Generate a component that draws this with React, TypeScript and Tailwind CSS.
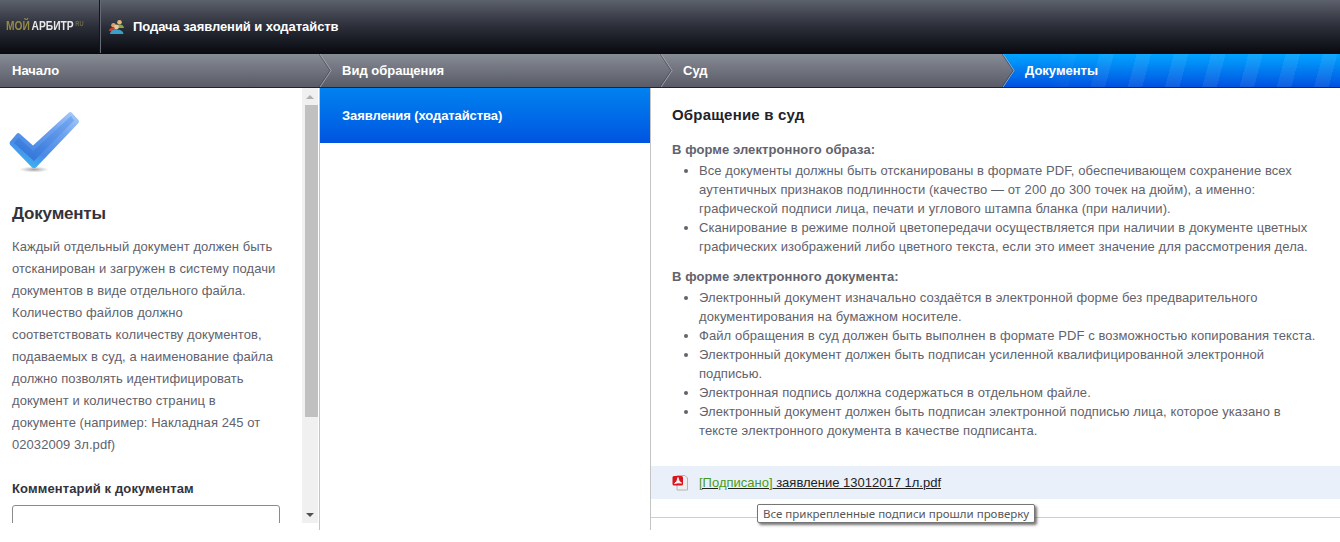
import React from "react";

function Chevron({ fill }: { fill?: boolean }) {
  return (
    <svg className="absolute left-0 top-0" width="14" height="33" viewBox="0 0 14 33" fill="none">
      <defs>
        <linearGradient id="greyTri" x1="0" y1="0" x2="0" y2="1">
          <stop offset="0" stopColor="#878b94" />
          <stop offset="1" stopColor="#595c66" />
        </linearGradient>
      </defs>
      {fill && <path d="M0 0 L11 16.5 L0 33 Z" fill="url(#greyTri)" />}
      <path d="M1 0 L12 16.5 L1 33" stroke="#a6a9b1" strokeWidth="1" />
      <path d="M0 0 L11 16.5 L0 33" stroke="#3a3d46" strokeWidth="1" opacity="0.55" />
    </svg>
  );
}

function Step({ label, className, labelClass }: { label: string; className: string; labelClass: string }) {
  return (
    <div className={`relative flex items-center h-full ${className}`}>
      <Chevron />
      <span className={`text-[13px] font-bold text-white ${labelClass}`}>{label}</span>
    </div>
  );
}

const Li = ({ children }: { children: React.ReactNode }) => <li className="list-disc">{children}</li>;

export default function App() {
  return (
    <div className="w-[1340px] h-[542px] bg-white overflow-hidden font-['Liberation_Sans',Arial,sans-serif] text-[#62626c]">
      {/* header */}
      <header className="h-[54px] flex bg-gradient-to-b from-[#5d616d] via-[#2b2e38] to-[#090a10]">
        <div className="w-[100px] h-[53px] border-r border-[#15161b] shadow-[1px_0_0_#666a75] flex items-center pl-[6px] pb-[1px]">
          <div className="flex items-center whitespace-nowrap origin-left scale-x-[0.82] text-[12.5px] font-bold">
            <span className="text-[#958a45]">МОЙ</span>
            <span className="text-[#e8e8e8] ml-[2px]">АРБИТР</span>
            <span className="text-[#6f6a45] text-[7px] ml-[2px] mb-[4px]">RU</span>
          </div>
        </div>
        <div className="flex items-center pl-[8px] pb-[1px] gap-[8px]">
          <svg width="17" height="16" viewBox="0 0 17 16">
            <circle cx="5.5" cy="6.2" r="2.3" fill="#d8a070" />
            <path d="M1 12 Q1 8.5 5.5 8.5 Q9 8.5 9.5 12 Z" fill="#c8402a" />
            <circle cx="11.5" cy="3.2" r="2.3" fill="#e0b878" />
            <path d="M8 9 Q8 5.6 11.5 5.6 Q15.5 5.6 16 9 Z" fill="#8aa83a" />
            <circle cx="8.5" cy="8" r="2.4" fill="#e6c8a0" />
            <path d="M2 15 Q2 10.5 8.5 10.5 Q15 10.5 15.5 15 Z" fill="#3aa0c8" />
          </svg>
          <span className="text-white text-[13px] font-bold tracking-[-0.06px]">Подача заявлений и ходатайств</span>
        </div>
      </header>

      {/* steps */}
      <nav className="h-[34px] flex border-b border-[#22242a] bg-gradient-to-b from-[#878b94] to-[#595c66]">
        <div className="w-[319px] flex items-center pl-[12px]">
          <span className="text-[13px] font-bold text-white">Начало</span>
        </div>
        <Step label="Вид обращения" className="w-[341px]" labelClass="ml-[23px]" />
        <Step label="Суд" className="w-[342px]" labelClass="ml-[23px]" />
        <div className="relative flex-1 flex items-center bg-gradient-to-b from-[#00a4ff] to-[#0050e0]">
          <div className="absolute inset-0 [mask-image:linear-gradient(90deg,transparent_40px,black_110px)] bg-[repeating-linear-gradient(105deg,rgba(255,255,255,0.0)_0px,rgba(255,255,255,0.0)_22px,rgba(255,255,255,0.07)_22px,rgba(255,255,255,0.07)_36px)]" />
          <Chevron fill />
          <span className="relative text-[13px] font-bold text-white ml-[23px]">Документы</span>
        </div>
      </nav>

      {/* body */}
      <main className="h-[442px] flex">
        {/* left */}
        <section className="w-[320px] h-full border-r border-[#c4c4c4]">
          <div className="h-[435px] flex">
            <div className="w-[302px] pl-[12px] pr-[23px] overflow-hidden">
              <svg className="mt-[22px] ml-[-3px] block" width="72" height="64" viewBox="0 0 72 64">
                <defs>
                  <linearGradient id="chk" x1="0.9" y1="0" x2="0.3" y2="1">
                    <stop offset="0" stopColor="#a6c8f8" />
                    <stop offset="0.35" stopColor="#6ea2ee" />
                    <stop offset="0.75" stopColor="#4a8ae6" />
                    <stop offset="1" stopColor="#3cb4f2" />
                  </linearGradient>
                  <linearGradient id="chk2" x1="0.9" y1="0" x2="0.2" y2="1">
                    <stop offset="0" stopColor="#74a8f2" />
                    <stop offset="1" stopColor="#2f74d8" />
                  </linearGradient>
                  <radialGradient id="sh">
                    <stop offset="0" stopColor="#666" stopOpacity="0.6" />
                    <stop offset="1" stopColor="#777" stopOpacity="0" />
                  </radialGradient>
                </defs>
                <ellipse cx="25" cy="59.5" rx="15" ry="3" fill="url(#sh)" />
                <path d="M0.8 32 L8 23.5 Q9 22.5 10.5 23.5 L24 35.5 L60 2.5 Q61.5 1.5 63 3 L69.5 10 Q70.5 11.5 69.5 13 L27 57.5 Q25 59 23 57.5 L1.2 35 Q0.2 33.5 0.8 32 Z" fill="url(#chk)" />
                <path d="M5 33 L9.5 27.5 L24 41 L62 6 L65 10.5 L25 51 Z" fill="url(#chk2)" />
              </svg>
              <h2 className="text-[17px] font-bold text-[#33333b] mt-[30px] leading-[20px] tracking-[-0.2px]">Документы</h2>
              <p className="text-[13px] leading-[22px] mt-[12px] tracking-[0.06px]">
                Каждый отдельный документ должен быть отсканирован и загружен в систему подачи документов в виде отдельного файла. Количество файлов должно соответствовать количеству документов, подаваемых в суд, а наименование файла должно позволять идентифицировать документ и количество страниц в документе (например: Накладная 245 от 02032009 3л.pdf)
              </p>
              <div className="text-[13px] font-bold text-[#33333b] mt-[24px] leading-[18px] tracking-[0.12px]">Комментарий к документам</div>
              <div className="mt-[7px] w-[268px] h-[40px] border border-[#8a8a8a] rounded-[3px] bg-white" />
            </div>
            <div className="w-[16px] bg-[#f0f0f0] flex flex-col items-center">
              <div className="h-[17px] flex items-center justify-center">
                <div className="w-0 h-0 border-x-[4px] border-x-transparent border-b-[4px] border-b-[#b0b0b0]" />
              </div>
              <div className="ml-[3px] w-[13px] h-[312px] bg-[#c0c0c0]" />
              <div className="flex-1" />
              <div className="h-[17px] flex items-center justify-center">
                <div className="w-0 h-0 border-x-[4px] border-x-transparent border-t-[4px] border-t-[#505050]" />
              </div>
            </div>
          </div>
        </section>

        {/* middle */}
        <section className="w-[331px] border-r border-[#c4c4c4] h-full">
          <div className="h-[55px] flex items-center pl-[22px] bg-gradient-to-b from-[#0082f0] to-[#0054e0]">
            <span className="text-white text-[13px] font-bold tracking-[-0.09px]">Заявления (ходатайства)</span>
          </div>
        </section>

        {/* right */}
        <section className="relative flex-1 flex flex-col">
          <div className="pl-[21px] pr-[20px] tracking-[0.08px]">
            <h3 className="text-[15px] font-bold text-[#22222a] mt-[17px] leading-[20px] tracking-[0.2px]">Обращение в суд</h3>
            <div className="text-[13px] font-bold mt-[15px] leading-[19px]">В форме электронного образа:</div>
            <ul className="text-[13px] leading-[19px] pl-[27px] mt-[2px]">
              <Li>Все документы должны быть отсканированы в формате PDF, обеспечивающем сохранение всех аутентичных признаков подлинности (качество — от 200 до 300 точек на дюйм), а именно: графической подписи лица, печати и углового штампа бланка (при наличии).</Li>
              <Li>Сканирование в режиме полной цветопередачи осуществляется при наличии в документе цветных графических изображений либо цветного текста, если это имеет значение для рассмотрения дела.</Li>
            </ul>
            <div className="text-[13px] font-bold mt-[11px] leading-[19px]">В форме электронного документа:</div>
            <ul className="text-[13px] leading-[19px] pl-[27px] mt-[2px]">
              <Li>Электронный документ изначально создаётся в электронной форме без предварительного документирования на бумажном носителе.</Li>
              <Li>Файл обращения в суд должен быть выполнен в формате PDF с возможностью копирования текста.</Li>
              <Li>Электронный документ должен быть подписан усиленной квалифицированной электронной подписью.</Li>
              <Li>Электронная подпись должна содержаться в отдельном файле.</Li>
              <Li>Электронный документ должен быть подписан электронной подписью лица, которое указано в тексте электронного документа в качестве подписанта.</Li>
            </ul>
          </div>
          <div className="mt-[26px] h-[33px] bg-[#e9f0f9] flex items-center pl-[21px]">
            <svg width="17" height="17" viewBox="0 0 17 17">
              <path d="M5 1.5 H13 L15.5 4 V16 H5 Z" fill="#eeeeee" stroke="#b4b4b4" />
              <rect x="0.5" y="2" width="10.5" height="9.5" rx="1.5" fill="#d8141c" />
              <path d="M2.5 9.5 Q5.5 8 6 3.5 Q6.5 8 9.5 9 Q5.5 8.5 2.5 9.5 Z" stroke="#fff" strokeWidth="0.9" fill="#fff" />
            </svg>
            <a className="ml-[10px] text-[13px] underline text-[#222]">
              <span className="text-[#4a9a1a]">[Подписано]</span> заявление 13012017 1л.pdf
            </a>
          </div>
          <div className="mt-[18px] border-b border-[#cfcfcf]" />
          <div className="absolute left-[106px] top-[416px] w-[278px] h-[19px] px-[5px] flex items-center bg-white border border-[#767676] rounded-[2px] shadow-[2px_2px_3px_rgba(0,0,0,0.55)] text-[11.5px] text-[#575757] font-['Noto_Sans',sans-serif] whitespace-nowrap">
            Все прикрепленные подписи прошли проверку
          </div>
        </section>
      </main>
    </div>
  );
}
